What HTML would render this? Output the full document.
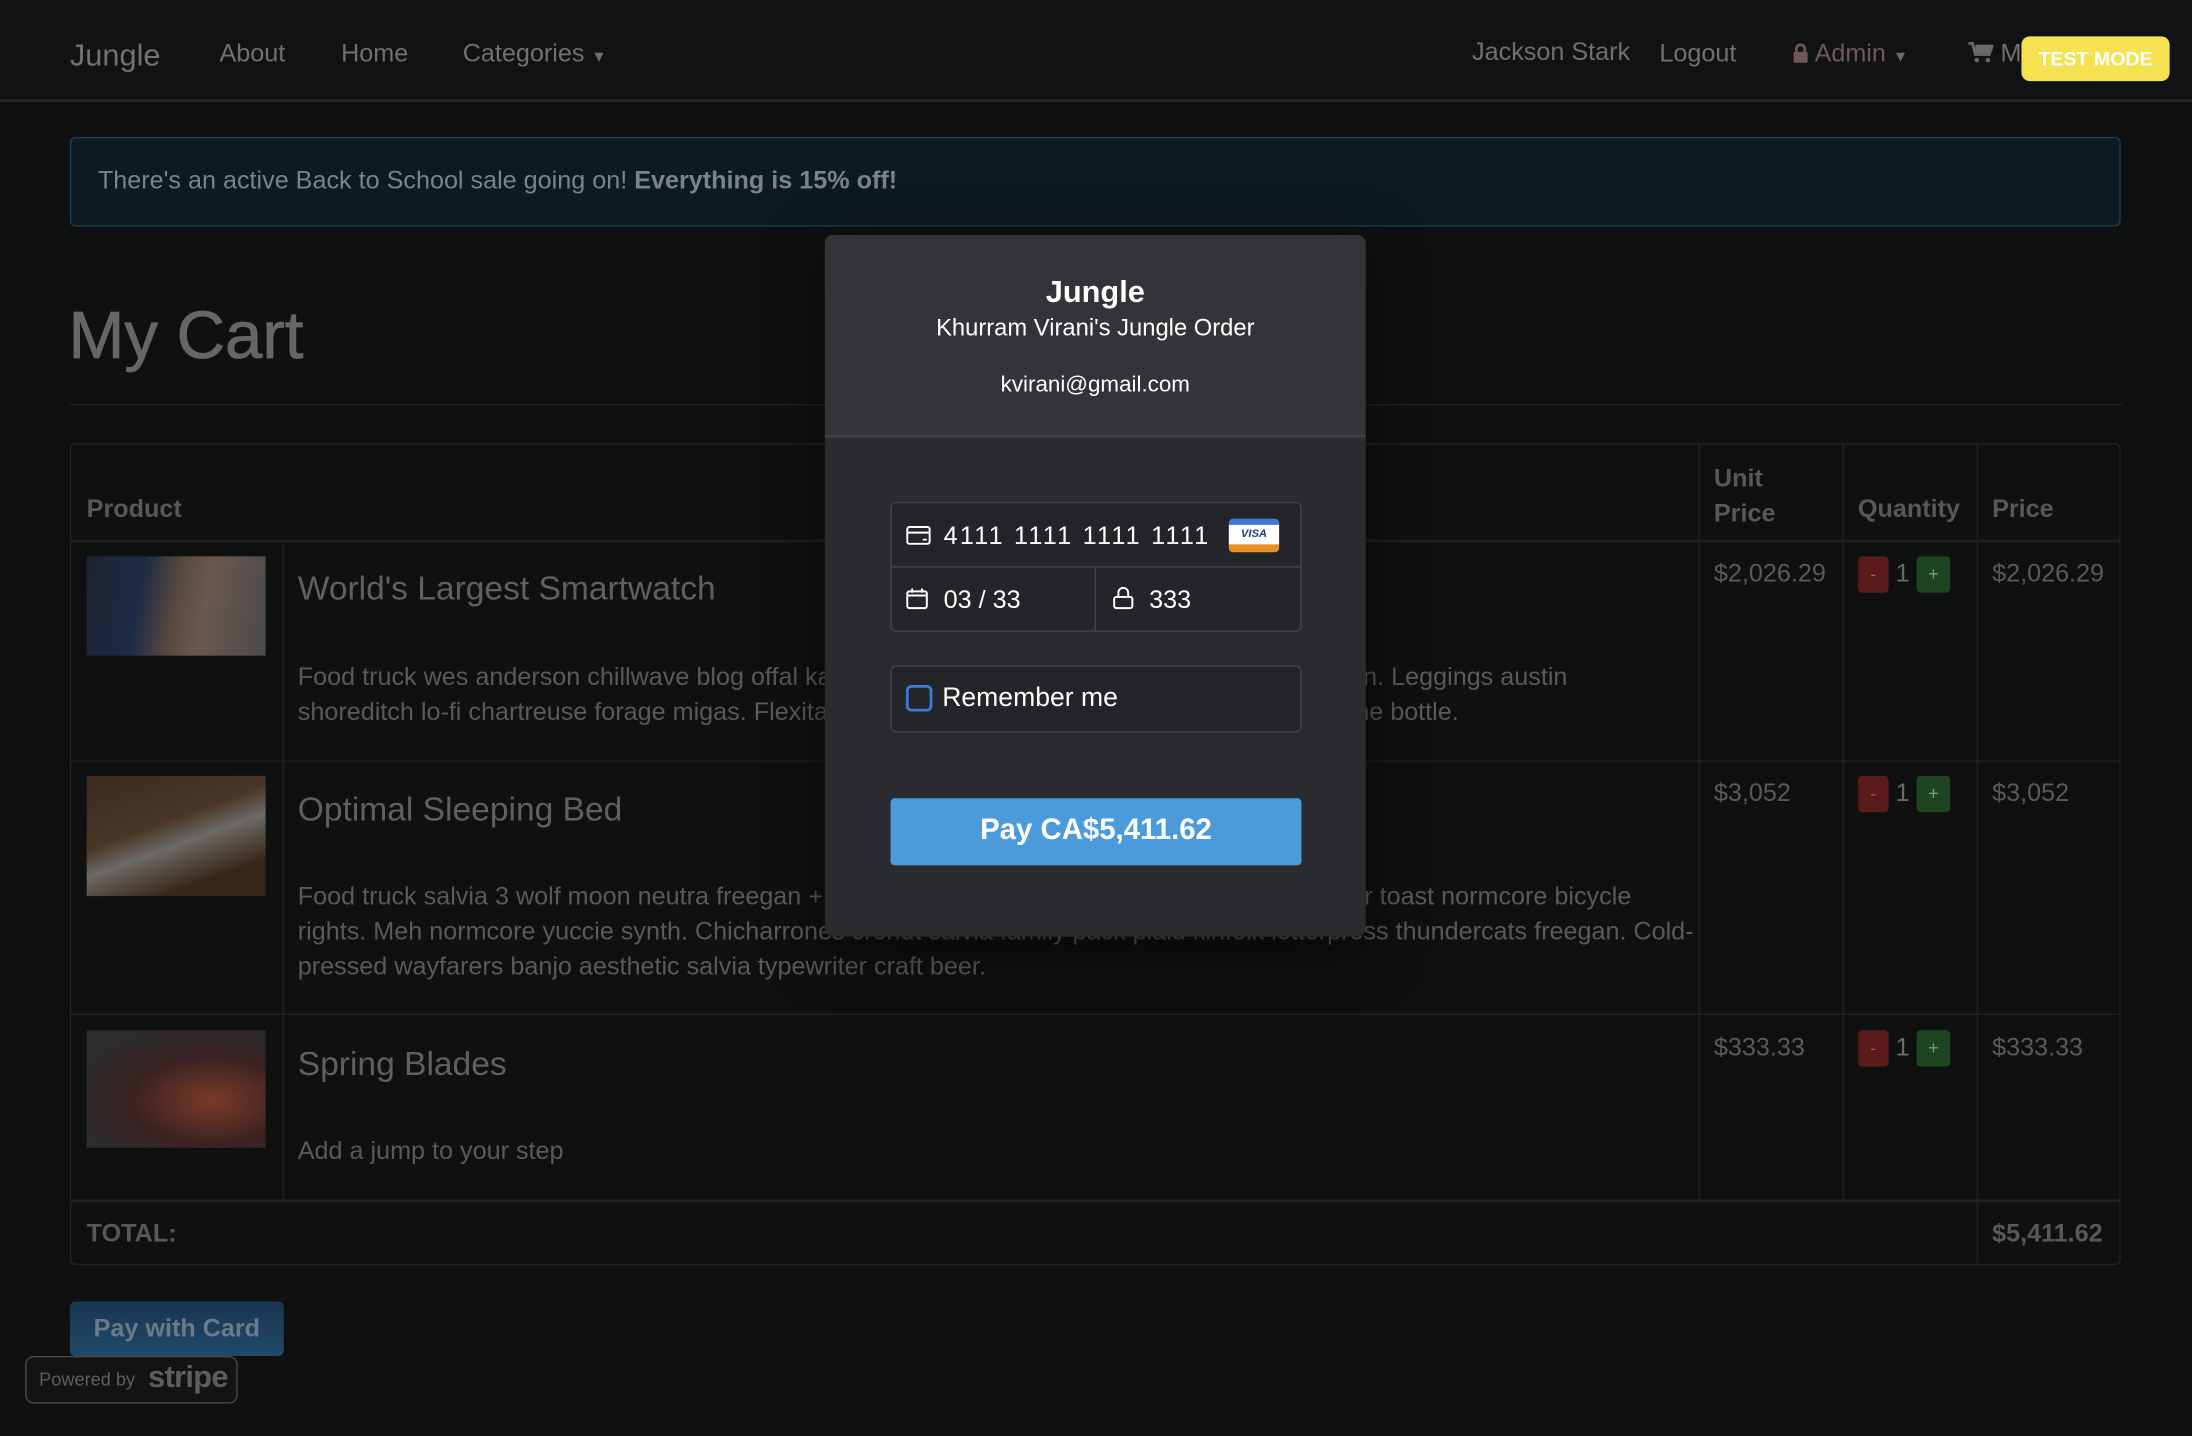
<!DOCTYPE html>
<html><head><meta charset="utf-8"><style>
html,body{margin:0;padding:0;background:#0f1111;overflow:hidden;width:2192px;height:1436px}
#w{position:absolute;left:0;top:0;width:1568px;height:1027px;transform:scale(1.39796);transform-origin:0 0;font-family:"Liberation Sans",Arial,sans-serif;color:#5e5e5e}
.a{position:absolute;white-space:nowrap}
.nav{position:absolute;left:0;top:0;width:1568px;height:71px;background:#111214;border-bottom:2px solid #262728}
.nav .a{font-size:18px;color:#707070;top:28px}
.vl{position:absolute;top:317px;width:1px;background:#222}
.hl{position:absolute;left:51px;width:1466px;height:2px;background:#1f2020}
.t{font-size:24px;color:#606060}
.d{font-size:18px;color:#5a5a5a;line-height:25px}
.p{font-size:18px;color:#5a5a5a}
.h{font-size:18px;font-weight:bold;color:#585858}
.bm{position:absolute;width:22px;height:26px;background:#5a1c1a;border-radius:3px;color:#b55;font-size:12px;text-align:center;line-height:26px}
.bp{position:absolute;width:24px;height:26px;background:#1f4420;border-radius:3px;color:#6a6;font-size:13px;text-align:center;line-height:26px}
.q{position:absolute;font-size:18px;color:#6a6a6a}
.img{position:absolute;left:62px;width:128px}
.m{position:absolute;left:590px;top:168px;width:387px;height:502px;border-radius:6px;background:#2a2b2e;box-shadow:0 10px 40px rgba(0,0,0,.6);overflow:hidden}
.mh{position:absolute;left:0;top:0;width:387px;height:143px;background:#333437;border-bottom:2px solid #404144}
.w{color:#fff}
</style></head><body><div id="w">
<div style="position:absolute;left:0;top:0;width:1568px;height:10px;background:#141517"></div>
<div class="nav">
 <div class="a" style="left:50px;top:27px;font-size:22px;color:#727272">Jungle</div>
 <div class="a" style="left:157px">About</div>
 <div class="a" style="left:244px">Home</div>
 <div class="a" style="left:331px">Categories <span style="font-size:11px">&#9660;</span></div>
 <div class="a" style="left:1053px;top:27px">Jackson Stark</div>
 <div class="a" style="left:1187px">Logout</div>
 <div class="a" style="left:1282px;color:#6e5858"><svg width="12" height="14" viewBox="0 0 12 14" style="vertical-align:-1px"><path d="M3 6V4a3 3 0 0 1 6 0v2" stroke="#6e5858" stroke-width="2" fill="none"/><rect x="1" y="6" width="10" height="8" rx="1" fill="#6e5858"/></svg> Admin <span style="font-size:11px;color:#6a6a6a">&#9660;</span></div>
 <div class="a" style="left:1408px"><svg width="18" height="15" viewBox="0 0 18 15" style="vertical-align:-1px"><path d="M0 1h3l2 8h10l2-6H5" stroke="#6a6a6a" stroke-width="2" fill="none"/><rect x="5" y="3" width="11" height="5" fill="#6a6a6a"/><circle cx="6" cy="13" r="1.6" fill="#6a6a6a"/><circle cx="14" cy="13" r="1.6" fill="#6a6a6a"/></svg> M</div>
 <div style="position:absolute;left:1446px;top:26px;width:106px;height:32px;background:#f6e251;border-radius:6px;color:#fff;font-weight:bold;font-size:14px;text-align:center;line-height:33px">TEST MODE</div>
</div>
<div style="position:absolute;left:50px;top:98px;width:1465px;height:62px;background:#0e1a22;border:1px solid #1f3d4c;border-radius:4px"></div>
<div class="a" style="left:70px;top:119px;font-size:18px;color:#7a8488">There's an active Back to School sale going on! <b>Everything is 15% off!</b></div>
<div class="a" style="left:49px;top:213px;font-size:48px;color:#666;-webkit-text-stroke:0.6px #666">My Cart</div>
<div class="hl" style="left:50px;width:1468px;top:289px;height:1px;background:#232424"></div>
<div style="position:absolute;left:50px;top:317px;width:1465px;height:586px;border:1px solid #232424;border-radius:4px"></div>
<div class="vl" style="left:202px;top:387px;height:471px"></div>
<div class="vl" style="left:1215px;height:541px"></div>
<div class="vl" style="left:1318px;height:541px"></div>
<div class="vl" style="left:1414px;height:588px"></div>
<div class="hl" style="top:386px"></div>
<div class="hl" style="top:544px;height:1px"></div>
<div class="hl" style="top:725px;height:1px"></div>
<div class="hl" style="top:858px"></div>
<div class="a h" style="left:62px;top:354px">Product</div>
<div class="a h" style="left:1226px;top:330px;line-height:25px">Unit<br>Price</div>
<div class="a h" style="left:1329px;top:354px">Quantity</div>
<div class="a h" style="left:1425px;top:354px">Price</div>
<div class="img" style="top:398px;height:71px;background:linear-gradient(100deg,#1e2430 0%,#1d2a45 30%,#5a4a40 50%,#6b5850 65%,#4a4a4a 100%)"></div>
<div class="img" style="top:555px;height:86px;background:linear-gradient(160deg,#3a2a1e,#4a3626 40%,#6a6a66 55%,#3a2618 80%)"></div>
<div class="img" style="top:737px;height:84px;background:radial-gradient(ellipse at 70% 60%,#7a3a28 0%,#3a2222 45%,#2c2c2e 80%)"></div>
<div class="a t" style="left:213px;top:408px">World's Largest Smartwatch</div>
<div class="a d" style="left:213px;top:472px">Food truck wes anderson chillwave blog offal kale chips hashtag vinyl pitchfork vegan ethical bun. Leggings austin<br>shoreditch lo-fi chartreuse forage migas. Flexitarian tote bag pour-over hoodie tattooed cliche one bottle.</div>
<div class="a t" style="left:213px;top:566px">Optimal Sleeping Bed</div>
<div class="a d" style="left:213px;top:629px">Food truck salvia 3 wolf moon neutra freegan + kale chips church-key literally sriracha raw butter toast normcore bicycle<br>rights. Meh normcore yuccie synth. Chicharrones cronut salvia family pack plaid kinfolk letterpress thundercats freegan. Cold-<br>pressed wayfarers banjo aesthetic salvia typewriter craft beer.</div>
<div class="a t" style="left:213px;top:748px">Spring Blades</div>
<div class="a d" style="left:213px;top:811px">Add a jump to your step</div>
<div class="a p" style="left:1226px;top:400px">$2,026.29</div><div class="a p" style="left:1425px;top:400px">$2,026.29</div>
<div class="a p" style="left:1226px;top:557px">$3,052</div><div class="a p" style="left:1425px;top:557px">$3,052</div>
<div class="a p" style="left:1226px;top:739px">$333.33</div><div class="a p" style="left:1425px;top:739px">$333.33</div>
<div class="bm" style="left:1329px;top:398px">-</div><div class="q" style="left:1356px;top:400px">1</div><div class="bp" style="left:1371px;top:398px">+</div>
<div class="bm" style="left:1329px;top:555px">-</div><div class="q" style="left:1356px;top:557px">1</div><div class="bp" style="left:1371px;top:555px">+</div>
<div class="bm" style="left:1329px;top:737px">-</div><div class="q" style="left:1356px;top:739px">1</div><div class="bp" style="left:1371px;top:737px">+</div>
<div class="a h" style="left:62px;top:872px">TOTAL:</div>
<div class="a h" style="left:1425px;top:872px">$5,411.62</div>
<div style="position:absolute;left:50px;top:931px;width:153px;height:39px;border-radius:4px;background:linear-gradient(#1a3550,#1f4a6a);color:#6a7a88;font-size:18px;font-weight:bold;text-align:center;line-height:39px">Pay with Card</div>
<div style="position:absolute;left:18px;top:970px;width:150px;height:32px;border:1px solid #4a4a4a;border-radius:6px;background:#121314"></div>
<div class="a" style="left:28px;top:979px;font-size:13px;color:#5e5e5e">Powered by</div>
<div class="a" style="left:106px;top:972px;font-size:22px;font-weight:bold;color:#5e5e5e;letter-spacing:-0.5px">stripe</div>

<div class="m">
 <div class="mh"></div>
 <div class="a w" style="left:0;width:387px;text-align:center;top:28px;font-size:22px;font-weight:bold">Jungle</div>
 <div class="a w" style="left:0;width:387px;text-align:center;top:57px;font-size:17px">Khurram Virani's Jungle Order</div>
 <div class="a w" style="left:0;width:387px;text-align:center;top:99px;font-size:16px">kvirani@gmail.com</div>
 <div style="position:absolute;left:47px;top:191px;width:292px;height:91px;border:1px solid #434447;border-radius:4px;background:#242528"></div>
 <div style="position:absolute;left:48px;top:237px;width:292px;height:1px;background:#434447"></div>
 <div style="position:absolute;left:193px;top:238px;width:1px;height:45px;background:#434447"></div>
 <svg class="a" style="left:58px;top:208px" width="18" height="14" viewBox="0 0 18 14"><rect x="1" y="1" width="16" height="12" rx="1.5" fill="none" stroke="#fff" stroke-width="1.4"/><line x1="1" y1="5" x2="17" y2="5" stroke="#fff" stroke-width="1.4"/><line x1="12" y1="10" x2="15" y2="10" stroke="#fff" stroke-width="1.2"/></svg>
 <div class="a w" style="left:85px;top:205px;font-size:18px;letter-spacing:1.6px">4111 1111 1111 1111</div>
 <div style="position:absolute;left:289px;top:203px;width:36px;height:24px;border-radius:3px;background:linear-gradient(#3f7ad0 0,#3f7ad0 18%,#fff 19%,#fff 76%,#e9902a 77%)"></div>
 <div class="a" style="left:289px;top:209px;width:36px;text-align:center;font-size:8px;font-weight:bold;font-style:italic;color:#1a3f8f">VISA</div>
 <svg class="a" style="left:58px;top:252px" width="16" height="16" viewBox="0 0 16 16"><rect x="1" y="3" width="14" height="12" rx="1.5" fill="none" stroke="#fff" stroke-width="1.4"/><line x1="1" y1="6" x2="15" y2="6" stroke="#fff" stroke-width="1.4"/><line x1="4.5" y1="1" x2="4.5" y2="4" stroke="#fff" stroke-width="1.4"/><line x1="11.5" y1="1" x2="11.5" y2="4" stroke="#fff" stroke-width="1.4"/></svg>
 <div class="a w" style="left:85px;top:251px;font-size:18px">03 / 33</div>
 <svg class="a" style="left:206px;top:251px" width="15" height="17" viewBox="0 0 15 17"><path d="M4 8V5a3.5 3.5 0 0 1 7 0v3" fill="none" stroke="#fff" stroke-width="1.4"/><rect x="1" y="8" width="13" height="8" rx="1.5" fill="none" stroke="#fff" stroke-width="1.4"/></svg>
 <div class="a w" style="left:232px;top:251px;font-size:18px">333</div>
 <div style="position:absolute;left:47px;top:308px;width:292px;height:46px;border:1px solid #434447;border-radius:4px;background:#242528"></div>
 <div style="position:absolute;left:58px;top:322px;width:19px;height:19px;border:2px solid #3f7ad8;border-radius:4px;box-sizing:border-box"></div>
 <div class="a w" style="left:84px;top:321px;font-size:19px">Remember me</div>
 <div style="position:absolute;left:47px;top:403px;width:294px;height:48px;border-radius:3px;background:#4b9ad9;color:#fff;font-size:21px;font-weight:bold;text-align:center;line-height:46px">Pay CA$5,411.62</div>
</div>
</div></body></html>
